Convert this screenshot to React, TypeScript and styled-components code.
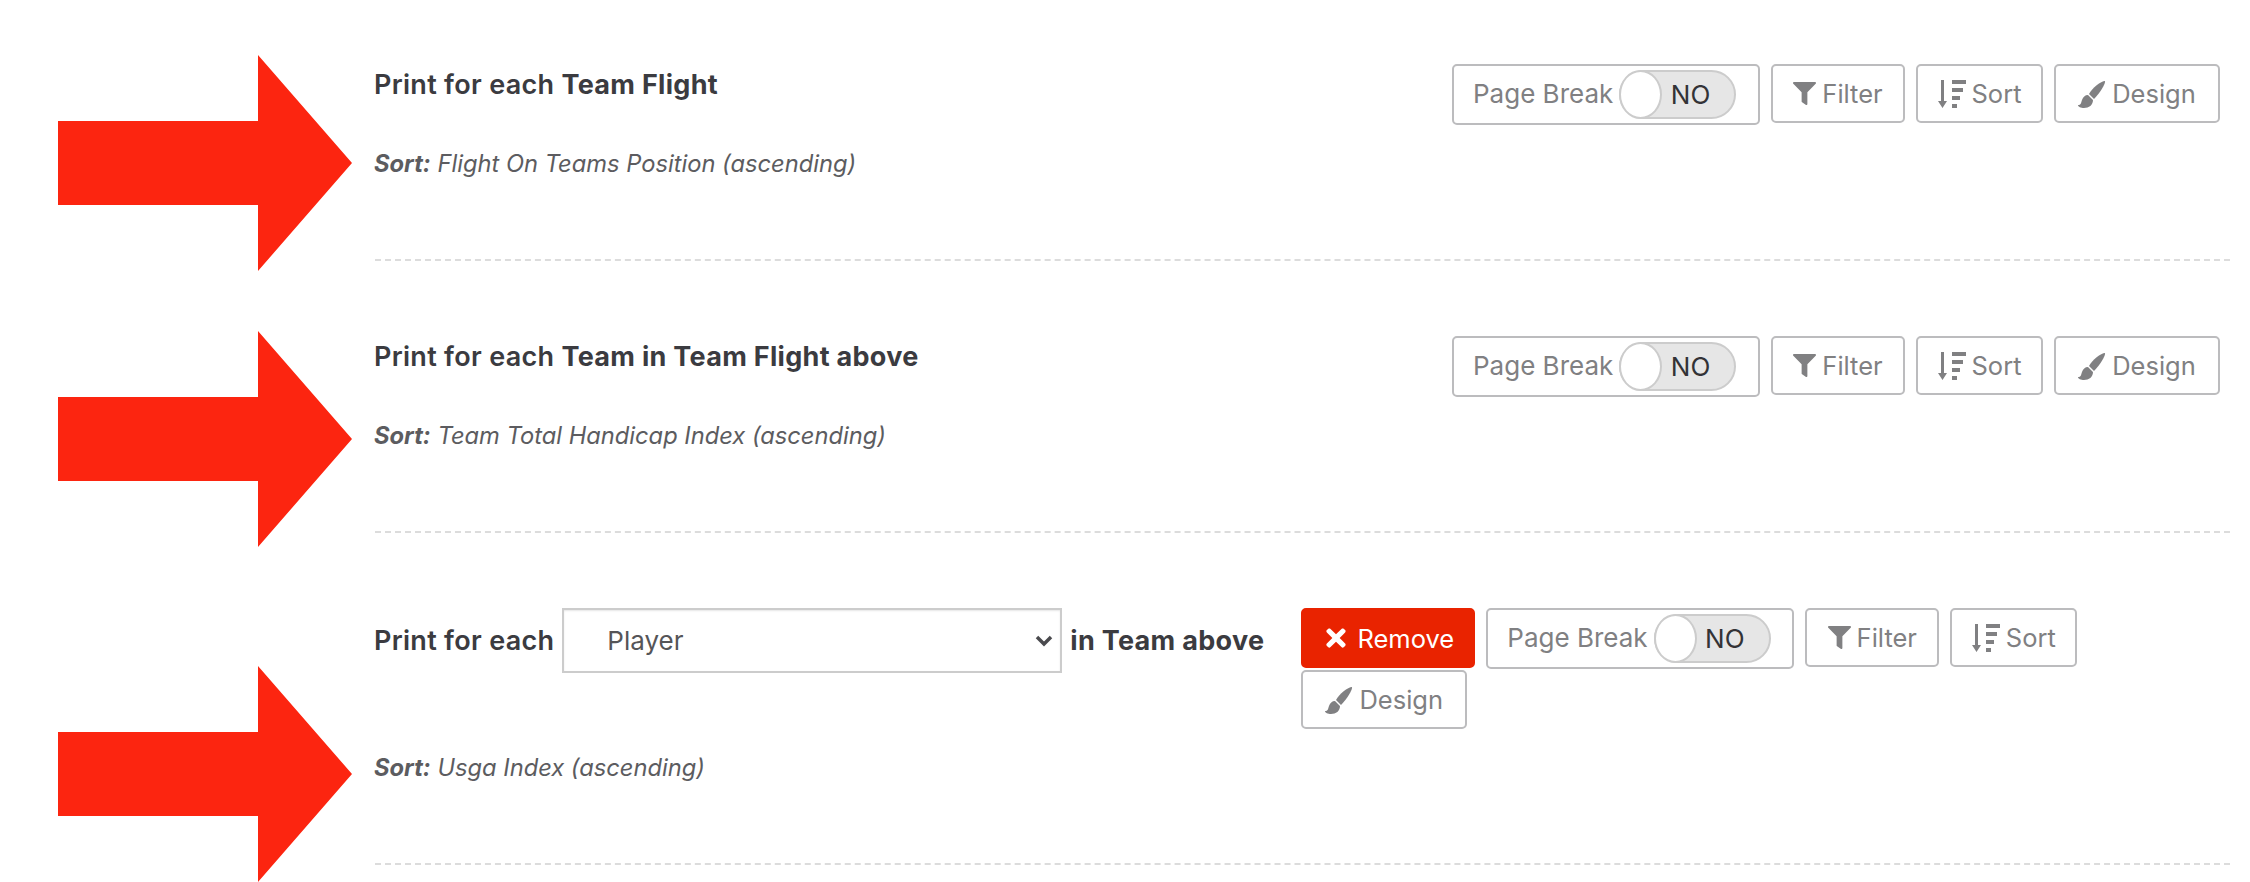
import React from 'react';
import styled, { createGlobalStyle } from 'styled-components';
import { FaFilter, FaTimes } from 'react-icons/fa';

const GlobalStyle = createGlobalStyle`
  html, body {
    margin: 0;
    padding: 0;
    background: #ffffff;
    overflow: hidden;
  }
  body {
    font-family: 'Inter', 'Lato', sans-serif;
  }
`;

const Page = styled.div`
  position: relative;
  width: 2250px;
  height: 882px;
  overflow: hidden;
  box-sizing: border-box;
  padding: 64px 20px 0 375px;
`;

const Arrow = styled.svg<{ $top: number }>`
  position: absolute;
  left: 58px;
  top: ${p => p.$top}px;
  width: 294px;
  height: 216px;
`;

const Row = styled.section`
  display: flex;
  flex-direction: column;
  padding: 0 10px 80px 0;
  box-sizing: border-box;
  border-bottom: 2px dashed #dcdcdc;
  margin-bottom: 75px;
`;

const Header = styled.div`
  display: flex;
  align-items: flex-start;
  justify-content: space-between;
  gap: 37px;
`;

const Title = styled.div<{ $inline?: boolean }>`
  display: flex;
  align-items: center;
  flex: none;
  gap: ${p => (p.$inline ? '8px' : '0')};
  height: ${p => (p.$inline ? '65px' : '40px')};
  margin-left: -1px;
  font-size: 27px;
  font-weight: 600;
  letter-spacing: 0.3px;
  color: #3b3b40;
  white-space: pre;

  b {
    font-weight: 700;
  }
`;

const Actions = styled.div<{ $fill?: boolean }>`
  display: flex;
  flex-wrap: wrap;
  align-items: flex-start;
  gap: 1px 11px;
  ${p => (p.$fill ? 'flex: 1;' : '')}
`;

const Button = styled.button<{ $width: number }>`
  display: inline-flex;
  align-items: center;
  justify-content: center;
  gap: 6px;
  width: ${p => p.$width}px;
  height: 59px;
  padding: 0;
  box-sizing: border-box;
  background: #ffffff;
  border: 2px solid #bcbcbe;
  border-radius: 5px;
  font-family: inherit;
  font-size: 25.5px;
  color: #808082;
`;

const RemoveButton = styled(Button)`
  height: 60px;
  gap: 7px;
  background: #e92300;
  border-color: #e92300;
  color: #ffffff;
`;

const PageBreak = styled(Button)`
  height: 61px;
  justify-content: flex-start;
  gap: 6px;
  padding-left: 19px;
  white-space: nowrap;
`;

const PageLabel = styled.span`
  margin-bottom: 2px;
  font-size: 26px;
`;

const Toggle = styled.span`
  position: relative;
  display: inline-flex;
  align-items: center;
  justify-content: flex-end;
  flex: none;
  width: 117px;
  height: 49px;
  padding-right: 24px;
  box-sizing: border-box;
  background: #e6e6e6;
  border: 2px solid #cccccc;
  border-radius: 25px;
  font-size: 26px;
  color: #333336;
`;

const Knob = styled.span`
  position: absolute;
  left: -2px;
  top: -2px;
  width: 43px;
  height: 49px;
  box-sizing: border-box;
  background: #ffffff;
  border: 2px solid #cccccc;
  border-radius: 50%;
`;

const SelectWrap = styled.span`
  position: relative;
  display: inline-block;
  width: 500px;
  height: 65px;
`;

const Select = styled.select`
  appearance: none;
  width: 100%;
  height: 100%;
  box-sizing: border-box;
  padding: 0 0 0 43px;
  background: #ffffff;
  border: 2px solid #cccccc;
  border-radius: 0;
  box-shadow: inset 0 1px 2px rgba(0, 0, 0, 0.1);
  font-family: inherit;
  font-size: 26px;
  color: #555558;
`;

const Chevron = styled.svg`
  position: absolute;
  right: 9px;
  top: 27px;
  width: 18px;
  height: 12px;
  pointer-events: none;
`;

const SortLine = styled.div`
  margin-top: 24px;
  margin-left: -1px;
  line-height: 30px;
  font-size: 23.7px;
  font-style: italic;
  color: #5c5c60;

  b {
    font-weight: 700;
  }
`;

const RedArrow = ({ top }: { top: number }) => (
  <Arrow $top={top} viewBox="0 0 294 216">
    <polygon points="0,66 200,66 200,0 294,108 200,216 200,150 0,150" fill="#fc2510" />
  </Arrow>
);

const SortIcon = () => (
  <svg width="28" height="28" viewBox="0 0 28 28" fill="currentColor">
    <path d="M3 0h3v21h3l-4.500 7L0 21h3z" />
    <rect x="14" y="0" width="14" height="4" />
    <rect x="14" y="8" width="11" height="4" />
    <rect x="14" y="16" width="8" height="4" />
    <rect x="14" y="24" width="5" height="4" />
  </svg>
);

const BrushIcon = () => (
  <svg width="28" height="28" viewBox="0 0 28 28" fill="currentColor">
    <path d="M27 1C28 3 22 13 16 19L11 14C14 8 23 1 27 1z" />
    <path d="M10 15L15 20C15 25 11 28 6 28C3 28 0 27 0 25C3 25 3 23 4 20C5 17 7 15 10 15z" />
  </svg>
);

const ActionButtons = ({ removable }: { removable?: boolean }) => (
  <Actions $fill={removable}>
    {removable && (
      <RemoveButton $width={174}>
        <FaTimes size={28} />
        Remove
      </RemoveButton>
    )}
    <PageBreak $width={308}>
      <PageLabel>Page Break</PageLabel>
      <Toggle>
        <Knob />
        NO
      </Toggle>
    </PageBreak>
    <Button $width={134}>
      <FaFilter size={23} />
      Filter
    </Button>
    <Button $width={127}>
      <SortIcon />
      Sort
    </Button>
    <Button $width={166}>
      <BrushIcon />
      Design
    </Button>
  </Actions>
);

const App = () => {
  return (
    <>
      <GlobalStyle />
      <Page>
        <Row>
          <Header>
            <Title>Print for each <b>Team Flight</b></Title>
            <ActionButtons />
          </Header>
          <SortLine>
            <b>Sort:</b> Flight On Teams Position (ascending)
          </SortLine>
        </Row>
        <Row>
          <Header>
            <Title>Print for each <b>Team in Team Flight above</b></Title>
            <ActionButtons />
          </Header>
          <SortLine>
            <b>Sort:</b> Team Total Handicap Index (ascending)
          </SortLine>
        </Row>
        <Row>
          <Header>
            <Title $inline>
              Print for each
              <SelectWrap>
                <Select defaultValue="Player">
                  <option>Player</option>
                  <option>Team</option>
                </Select>
                <Chevron viewBox="0 0 18 12">
                  <path d="M2 2L9 9L16 2" fill="none" stroke="#4a4a4e" strokeWidth="3.500" />
                </Chevron>
              </SelectWrap>
              <b>in Team above</b>
            </Title>
            <ActionButtons removable />
          </Header>
          <SortLine>
            <b>Sort:</b> Usga Index (ascending)
          </SortLine>
        </Row>
        <RedArrow top={55} />
        <RedArrow top={331} />
        <RedArrow top={666} />
      </Page>
    </>
  );
};

export default App;
